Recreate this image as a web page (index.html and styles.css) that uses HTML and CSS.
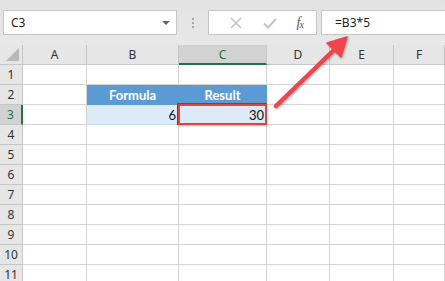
FILE: index.html
```html
<!DOCTYPE html>
<html lang="en">
<head>
  <meta charset="UTF-8" />
  <title>Formula Bar</title>
  <link rel="stylesheet" href="styles.css">
</head>
<body>
  <!-- Formula bar -->
  <div class="toolbar">
    <div class="namebox">
      <span>C3</span>
      <span class="drop"></span>
    </div>
    <div class="grip"><i></i><i></i><i></i></div>
    <div class="fxbox">
      <svg width="16" height="16" viewBox="0 0 16 16"><path d="M3 3 L13 13 M13 3 L3 13" stroke="#c4c4c4" stroke-width="1.6" fill="none"/></svg>
      <svg width="16" height="16" viewBox="0 0 16 16"><path d="M2 8.5 L6 12.5 L14 4" stroke="#c4c4c4" stroke-width="2" fill="none"/></svg>
      <span class="fx">f<sub>x</sub></span>
    </div>
    <div class="formula">=B3*5</div>
  </div>

  <!-- Sheet -->
  <div class="sheet">
    <div class="hd corner"><span class="tri"></span></div>
    <div class="hd">A</div>
    <div class="hd">B</div>
    <div class="hd sel-col">C</div>
    <div class="hd">D</div>
    <div class="hd">E</div>
    <div class="hd">F</div>

    <div class="rh">1</div>
    <div class="c"></div><div class="c"></div><div class="c"></div><div class="c"></div><div class="c"></div><div class="c"></div>

    <div class="rh">2</div>
    <div class="c"></div>
    <div class="c th">Formula</div>
    <div class="c th">Result</div>
    <div class="c"></div><div class="c"></div><div class="c"></div>

    <div class="rh sel-row">3</div>
    <div class="c"></div>
    <div class="c td">6</div>
    <div class="c td active">30</div>
    <div class="c"></div><div class="c"></div><div class="c"></div>

    <div class="rh">4</div>
    <div class="c"></div><div class="c"></div><div class="c"></div><div class="c"></div><div class="c"></div><div class="c"></div>
    <div class="rh">5</div>
    <div class="c"></div><div class="c"></div><div class="c"></div><div class="c"></div><div class="c"></div><div class="c"></div>
    <div class="rh">6</div>
    <div class="c"></div><div class="c"></div><div class="c"></div><div class="c"></div><div class="c"></div><div class="c"></div>
    <div class="rh">7</div>
    <div class="c"></div><div class="c"></div><div class="c"></div><div class="c"></div><div class="c"></div><div class="c"></div>
    <div class="rh">8</div>
    <div class="c"></div><div class="c"></div><div class="c"></div><div class="c"></div><div class="c"></div><div class="c"></div>
    <div class="rh">9</div>
    <div class="c"></div><div class="c"></div><div class="c"></div><div class="c"></div><div class="c"></div><div class="c"></div>
    <div class="rh">10</div>
    <div class="c"></div><div class="c"></div><div class="c"></div><div class="c"></div><div class="c"></div><div class="c"></div>
    <div class="rh">11</div>
    <div class="c"></div><div class="c"></div><div class="c"></div><div class="c"></div><div class="c"></div><div class="c"></div>
  </div>

  <!-- Annotation arrow -->
  <svg class="arrow" width="445" height="281" viewBox="0 0 445 281">
    <line x1="276" y1="106" x2="336" y2="48" stroke="#f1454b" stroke-width="4.5" stroke-linecap="round"/>
    <polygon points="347,37 327,43 341,57" fill="#f1454b" stroke="#f1454b" stroke-width="1.5" stroke-linejoin="round"/>
  </svg>
</body>
</html>
```

FILE: styles.css
```css
body {
  margin: 0;
  width: 445px;
  height: 281px;
  overflow: hidden;
  position: relative;
  background: #e6e6e6;
  font-family: "Noto Sans", "Open Sans", sans-serif;
  color: #222;
}

/* Formula bar */
.toolbar {
  display: flex;
  align-items: center;
  height: 25px;
  padding: 10px 0 10px 3px;
  background: linear-gradient(#e2e2e2, #e8e8e8);
}
.namebox {
  box-sizing: border-box;
  width: 174px;
  height: 25px;
  background: #fff;
  border: 1px solid #c6c6c6;
  display: flex;
  align-items: center;
  justify-content: space-between;
  padding: 0 6px 0 7px;
  font-size: 12px;
}
.drop {
  width: 0;
  height: 0;
  border-left: 4px solid transparent;
  border-right: 4px solid transparent;
  border-top: 4px solid #666;
}
.grip {
  width: 31px;
  display: flex;
  flex-direction: column;
  align-items: center;
  gap: 2px;
}
.grip i {
  width: 2px;
  height: 2px;
  background: #a8a8a8;
}
.fxbox {
  box-sizing: border-box;
  width: 109px;
  height: 25px;
  background: #fff;
  border: 1px solid #c6c6c6;
  display: flex;
  align-items: center;
  justify-content: space-around;
  padding: 0 4px 0 10px;
}
.fx {
  font-family: "Liberation Serif", serif;
  font-style: italic;
  font-size: 14px;
  color: #555;
  letter-spacing: -1px;
}
.fx sub {
  font-size: 10px;
  vertical-align: 0;
  position: relative;
  top: 1px;
}
.formula {
  box-sizing: border-box;
  flex: 1;
  height: 25px;
  margin-left: 4px;
  background: #fff;
  border: 1px solid #c6c6c6;
  border-right: none;
  display: flex;
  align-items: center;
  padding-left: 13px;
  font-size: 12px;
}

/* Sheet */
.sheet {
  display: grid;
  grid-template-columns: 23px 64px 92px 88px 63px 64px 51px;
  grid-auto-rows: 20px;
  background: #fff;
}
.sheet > div {
  box-sizing: border-box;
  border-right: 1px solid #d4d4d4;
  border-bottom: 1px solid #d4d4d4;
  display: flex;
  align-items: center;
}
.hd {
  background: #e6e6e6;
  justify-content: center;
  font-size: 12px;
  color: #333;
  border-color: #c6c6c6 !important;
}
.corner {
  position: relative;
}
.tri {
  position: absolute;
  right: 3px;
  bottom: 3px;
  width: 0;
  height: 0;
  border-left: 13px solid transparent;
  border-bottom: 13px solid #b8b8b8;
}
.sel-col {
  background: #d2d2d2;
  color: #217346;
  border-bottom: 2px solid #217346 !important;
}
.rh {
  background: #e6e6e6;
  justify-content: center;
  font-size: 12px;
  color: #333;
  border-color: #c6c6c6 !important;
}
.sel-row {
  background: #d2d2d2;
  color: #217346;
  border-right: 2px solid #217346 !important;
}
.c {
  font-family: "Lato", "Liberation Sans", sans-serif;
  font-size: 13px;
  padding: 0 2px;
}
.th {
  background: #5b9bd5;
  color: #fff;
  font-weight: bold;
  justify-content: center;
  border-color: #5b9bd5 !important;
}
.td {
  background: #ddebf7;
  justify-content: flex-end;
  color: #111;
  border-color: #c7d9ea !important;
}
.active {
  position: relative;
}
.active::before {
  content: "";
  position: absolute;
  left: -2px;
  top: -2px;
  right: -1px;
  bottom: -1px;
  border: 1px solid #217346;
}
.active::after {
  content: "";
  position: absolute;
  left: -1px;
  top: -1px;
  right: -1px;
  bottom: -1px;
  border: 2px solid #e8403f;
  box-shadow: 0 1px 2px rgba(0, 0, 0, 0.25);
}

/* Arrow */
.arrow {
  position: absolute;
  left: 0;
  top: 0;
  pointer-events: none;
  filter: drop-shadow(1px 1px 1px rgba(0, 0, 0, 0.3));
}
```
